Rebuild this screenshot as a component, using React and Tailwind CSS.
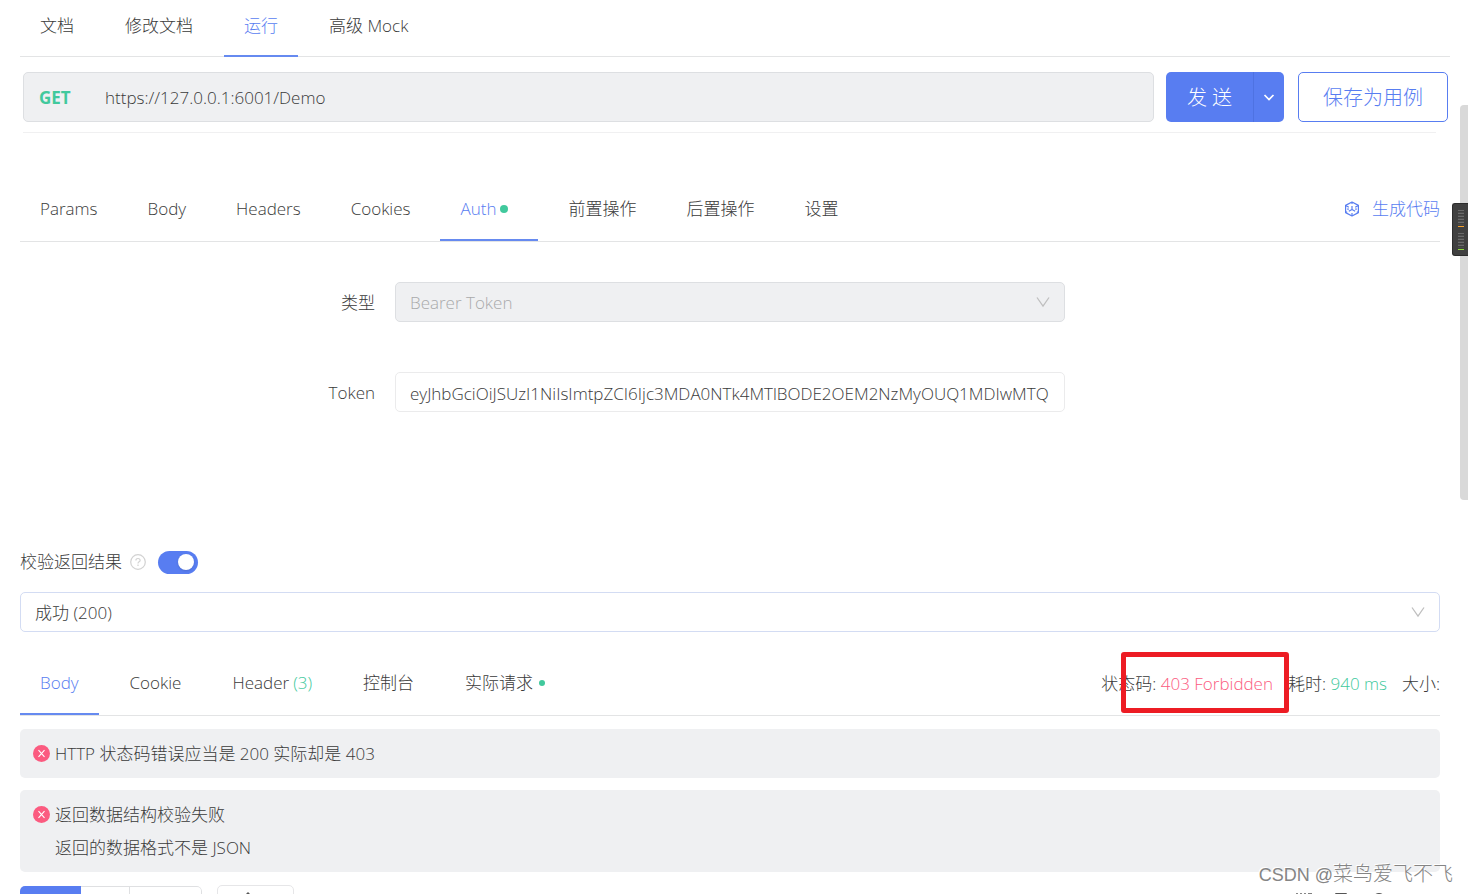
import { useState } from 'react'

// Onglets du haut de la page
const ongletsPage = ['文档', '修改文档', '运行', '高级 Mock']
// Onglets de la requête
const ongletsRequete = ['Params', 'Body', 'Headers', 'Cookies', 'Auth', '前置操作', '后置操作', '设置']
// Onglets de la réponse
const ongletsReponse = ['Body', 'Cookie', 'Header', '控制台', '实际请求']

// Bouton d'onglet commun aux trois barres
function Onglet({ actif, onClick, children }) {
    return (
        <button
            type='button'
            role='tab'
            aria-selected={actif}
            onClick={onClick}
            className={actif
                ? 'flex items-center px-5 pt-0.5 border-b-2 border-[#668af0] text-[#587df1] whitespace-nowrap'
                : 'flex items-center px-5 pt-0.5 border-b-2 border-transparent whitespace-nowrap'}
        >
            {children}
        </button>
    )
}

function Chevron() {
    return (
        <svg className='pointer-events-none absolute right-3.5 top-3 size-4' viewBox='0 0 16 16' fill='none' stroke='#bfbfbf' strokeWidth='1.3'>
            <path d='M2 3.5 8 12l6-8.5' />
        </svg>
    )
}

function IconeErreur() {
    return (
        <svg className='mt-2 size-[17px] shrink-0' viewBox='0 0 17 17' fill='none'>
            <circle cx='8.5' cy='8.5' r='8.5' fill='#fb5b80' />
            <path d='m5.5 5.2 6 6.6M11.5 5.2l-6 6.6' stroke='#fff' strokeWidth='1.1' />
        </svg>
    )
}

function IconeCode() {
    return (
        <svg className='size-4' viewBox='0 0 16 16' fill='none' stroke='#587df1' strokeWidth='1.2' strokeLinejoin='round'>
            <path d='M8 1 14.4 4.4v7.2L8 15l-6.4-3.4V4.4Z' />
            <path d='M8 1v2M8 5v3.4l-3.2 1.9M8 8.4l3.2 1.9M1.6 11.6l1.6-.9M14.4 11.6l-1.6-.9M8 15v-3M1.6 4.4l3.2 1.8M14.4 4.4l-3.2 1.8M4 9V7.2M12 9V7.2' />
        </svg>
    )
}

// Petit indicateur de niveau collé au bord droit de la fenêtre
function Niveau({ couleur }) {
    return (
        <svg className='h-[17px] w-1.5' viewBox='0 0 6 17' shapeRendering='crispEdges'>
            <path d='M0 .5h6M0 3.5h6M0 6.5h6M0 9.5h6M0 12.5h6' stroke='#6a6a6a' />
            <path d='M0 2h6M0 5h6M0 8h6M0 11h6M0 14h6' stroke='#4c4c4c' />
            <path d='M0 16.5h6' stroke={couleur} />
        </svg>
    )
}

function App() {
    const [page, setPage] = useState('运行')
    const [requete, setRequete] = useState('Auth')
    const [reponse, setReponse] = useState('Body')
    const [validation, setValidation] = useState(true)

    return (
        <div className="relative h-screen overflow-hidden bg-white font-['Open_Sans','Noto_Sans_CJK_SC',sans-serif] text-[17px] leading-6 font-light text-[#3a3a3a]">

            {/* ONGLETS DE LA PAGE */}
            <nav role='tablist' className='ml-5 mr-[18px] flex h-[57px] gap-[11px] border-b border-[#e3e4e5] *:-mb-px'>
                {ongletsPage.map((nom) => (
                    <Onglet key={nom} actif={page === nom} onClick={() => setPage(nom)}>
                        <span className='pb-1.5'>{nom}</span>
                    </Onglet>
                ))}
            </nav>

            {/* BARRE D'ADRESSE */}
            <section className='ml-[23px] mr-5 mt-[15px] flex h-[50px]'>
                <div className='flex flex-1 items-center rounded-[5px] border border-[#dddfe2] bg-[#eff0f2] px-[15px] pt-0.5'>
                    <span className='w-[66px] font-bold text-[#41c99d]'>GET</span>
                    <input
                        aria-label='URL'
                        className='min-w-0 flex-1 bg-transparent outline-none'
                        defaultValue='https://127.0.0.1:6001/Demo'
                    />
                </div>
                <div className='ml-3 flex overflow-hidden rounded-[5px] bg-[#587df1] text-white'>
                    <button type='button' className='w-[87px] pt-0.5 text-xl'>发 送</button>
                    <button type='button' aria-label='更多' className='flex w-[31px] items-center justify-center border-l border-[#4e72e2]'>
                        <svg className='size-3' viewBox='0 0 12 12' fill='none' stroke='#fff' strokeWidth='1.7'>
                            <path d='m1.5 4 4.5 4.5L10.5 4' />
                        </svg>
                    </button>
                </div>
                <button type='button' className='ml-3.5 w-[150px] rounded-[5px] border border-[#587df1] pt-0.5 text-xl text-[#587df1]'>保存为用例</button>
            </section>
            <hr className='ml-[23px] mr-8 mt-2.5 border-[#f0f0f1]' />

            <main className='ml-5 mr-7'>
                {/* ONGLETS DE LA REQUÊTE */}
                <div className='mt-11 flex h-[65px] justify-between border-b border-[#e3e4e5]'>
                    <div role='tablist' className='flex gap-2.5'>
                        {ongletsRequete.map((nom) => (
                            <Onglet key={nom} actif={requete === nom} onClick={() => setRequete(nom)}>
                                {nom}
                                {nom === 'Auth' && <i className='ml-1 mr-2.5 size-2 rounded-full bg-[#41c99d]' />}
                            </Onglet>
                        ))}
                    </div>
                    <a href='#' className='flex items-center gap-3 text-[#587df1]'>
                        <IconeCode />
                        生成代码
                    </a>
                </div>

                {/* FORMULAIRE D'AUTHENTIFICATION */}
                <form className='mt-10 flex flex-col gap-[50px]'>
                    <div className='flex items-center gap-5'>
                        <label htmlFor='type' className='w-1/4 pt-0.5 text-right'>类型</label>
                        <div className='relative w-full max-w-[670px]'>
                            <select id='type' disabled className='block h-10 w-full appearance-none rounded-[5px] border border-[#dddfe2] bg-[#eff0f2] px-3.5 pt-0.5 text-[#a9aaab] opacity-100'>
                                <option>Bearer Token</option>
                            </select>
                            <Chevron />
                        </div>
                    </div>
                    <div className='flex items-center gap-5'>
                        <label htmlFor='token' className='w-1/4 pt-0.5 text-right'>Token</label>
                        <input
                            id='token'
                            className='h-10 w-full max-w-[670px] rounded-[5px] border border-[#ebebec] px-3.5 pt-0.5 outline-none'
                            defaultValue='eyJhbGciOiJSUzI1NiIsImtpZCI6Ijc3MDA0NTk4MTlBODE2OEM2NzMyOUQ1MDIwMTQ'
                        />
                    </div>
                </form>

                {/* VALIDATION DE LA RÉPONSE */}
                <div className='mt-[138px] flex h-6 items-center'>
                    <label htmlFor='validation'>校验返回结果</label>
                    <svg className='ml-2 size-4' viewBox='0 0 16 16' fill='none' stroke='#d2d2d2' strokeWidth='1.2'>
                        <circle cx='8' cy='8' r='7.3' />
                        <path d='M5.9 6.5c0-1.2.9-2 2.1-2s2.1.8 2.1 1.9c0 1.4-2.1 1.5-2.1 3M8 10.6V12' />
                    </svg>
                    <input
                        id='validation'
                        type='checkbox'
                        role='switch'
                        checked={validation}
                        onChange={(e) => setValidation(e.target.checked)}
                        className="ml-3 flex h-[23px] w-10 appearance-none items-center rounded-full bg-[#bfbfbf] px-1 before:size-4 before:rounded-full before:bg-white before:shadow before:content-[''] checked:justify-end checked:bg-[#587df1]"
                    />
                </div>
                <div className='relative mt-[18px]'>
                    <select aria-label='响应' className='block h-10 w-full appearance-none rounded-[5px] border border-[#d3dcf3] bg-white px-3.5 pt-0.5'>
                        <option>成功 (200)</option>
                    </select>
                    <Chevron />
                </div>

                {/* ONGLETS DE LA RÉPONSE */}
                <div className='mt-[19px] flex h-[65px] justify-between border-b border-[#e3e4e5]'>
                    <div role='tablist' className='flex gap-[11px]'>
                        {ongletsReponse.map((nom) => (
                            <Onglet key={nom} actif={reponse === nom} onClick={() => setReponse(nom)}>
                                {nom}
                                {nom === 'Header' && <span className='ml-1 text-[#41c99d]'>(3)</span>}
                                {nom === '实际请求' && <i className='ml-1.5 size-1.5 rounded-full bg-[#41c99d]' />}
                            </Onglet>
                        ))}
                    </div>
                    <div className='flex items-center gap-[15px] pt-0.5 whitespace-nowrap'>
                        <p className='relative'>
                            状态码: <span className='text-[#fb5b80]'>403 Forbidden</span>
                            {/* Cadre rouge dessiné par-dessus le statut */}
                            <span className='absolute -right-4 -top-5 h-[61px] w-[168px] rounded-[3px] border-[5px] border-[#ed1c24]' />
                        </p>
                        <p>耗时: <span className='text-[#41c99d]'>940 ms</span></p>
                        <p>大小:</p>
                    </div>
                </div>

                {/* ERREURS DE VALIDATION */}
                <ul className='mt-[13px] flex flex-col gap-3 leading-[33px]'>
                    <li className='flex gap-[5px] rounded-[5px] bg-[#eff0f2] px-[13px] py-2'>
                        <IconeErreur />
                        <p>HTTP 状态码错误应当是 200 实际却是 403</p>
                    </li>
                    <li className='flex gap-[5px] rounded-[5px] bg-[#eff0f2] px-[13px] py-2'>
                        <IconeErreur />
                        <div>
                            <p>返回数据结构校验失败</p>
                            <p>返回的数据格式不是 JSON</p>
                        </div>
                    </li>
                </ul>

                {/* BARRE D'OUTILS DE LA RÉPONSE */}
                <div className='mt-[13px] flex'>
                    <div className='mt-px flex h-10 overflow-hidden rounded-[5px]'>
                        <button type='button' aria-label='Pretty' className='w-[61px] bg-[#587df1]' />
                        <button type='button' aria-label='Raw' className='w-[49px] border-y border-r border-[#dfe0e2]' />
                        <button type='button' aria-label='Preview' className='w-[72px] rounded-r-[5px] border-y border-r border-[#dfe0e2]' />
                    </div>
                    <button type='button' aria-label='Format' className='ml-[15px] flex h-10 w-[77px] rounded-[5px] border border-[#e6e6e8] pl-[22px] pt-1.5'>
                        <svg className='size-4' viewBox='0 0 16 16' fill='none' stroke='#555' strokeWidth='1.4'>
                            <path d='m4 5 4-4 4 4M4 11l4 4 4-4' />
                        </svg>
                    </button>
                    <div className='ml-auto mr-[52px] flex gap-[22px] pt-2'>
                        <button type='button' aria-label='Extraire' className='size-4'>
                            <svg viewBox='0 0 16 16' fill='none' stroke='#555' strokeWidth='1.4'>
                                <path d='M1 0v14M5 0v14M9 0v14M12 1h4v14' />
                            </svg>
                        </button>
                        <button type='button' aria-label='Copier' className='size-4'>
                            <svg viewBox='0 0 16 16' fill='none' stroke='#555' strokeWidth='1.4'>
                                <path d='M2 .7h10v14H2Z' />
                            </svg>
                        </button>
                        <button type='button' aria-label='Rechercher' className='size-4'>
                            <svg viewBox='0 0 16 16' fill='none' stroke='#555' strokeWidth='1.4'>
                                <circle cx='7' cy='7' r='6.2' />
                                <path d='m11.5 11.5 4 4' />
                            </svg>
                        </button>
                    </div>
                </div>
            </main>

            {/* BARRE DE DÉFILEMENT ET INDICATEUR */}
            <div className='absolute right-0 top-[105px] h-[395px] w-2 rounded-l-[4px] bg-[#d9d9d9]' />
            <div className='absolute right-0 top-[203px] flex h-[53px] w-4 flex-col gap-1.5 rounded-l-[3px] border border-r-0 border-[#2c2c2c] bg-[#404040] pl-[5px] pt-1.5'>
                <Niveau couleur='#f7a12b' />
                <Niveau couleur='#8fdc3c' />
            </div>

            {/* FILIGRANE */}
            <p className="absolute bottom-[5px] right-[15px] font-['Liberation_Sans','Noto_Sans_CJK_SC',sans-serif] text-xl leading-7 text-[#858585] [text-shadow:-1px_-1px_0_#fff]">
                <span className='text-lg leading-7'>CSDN @</span>菜鸟爱飞不飞
            </p>
        </div>
    )
}

export default App
